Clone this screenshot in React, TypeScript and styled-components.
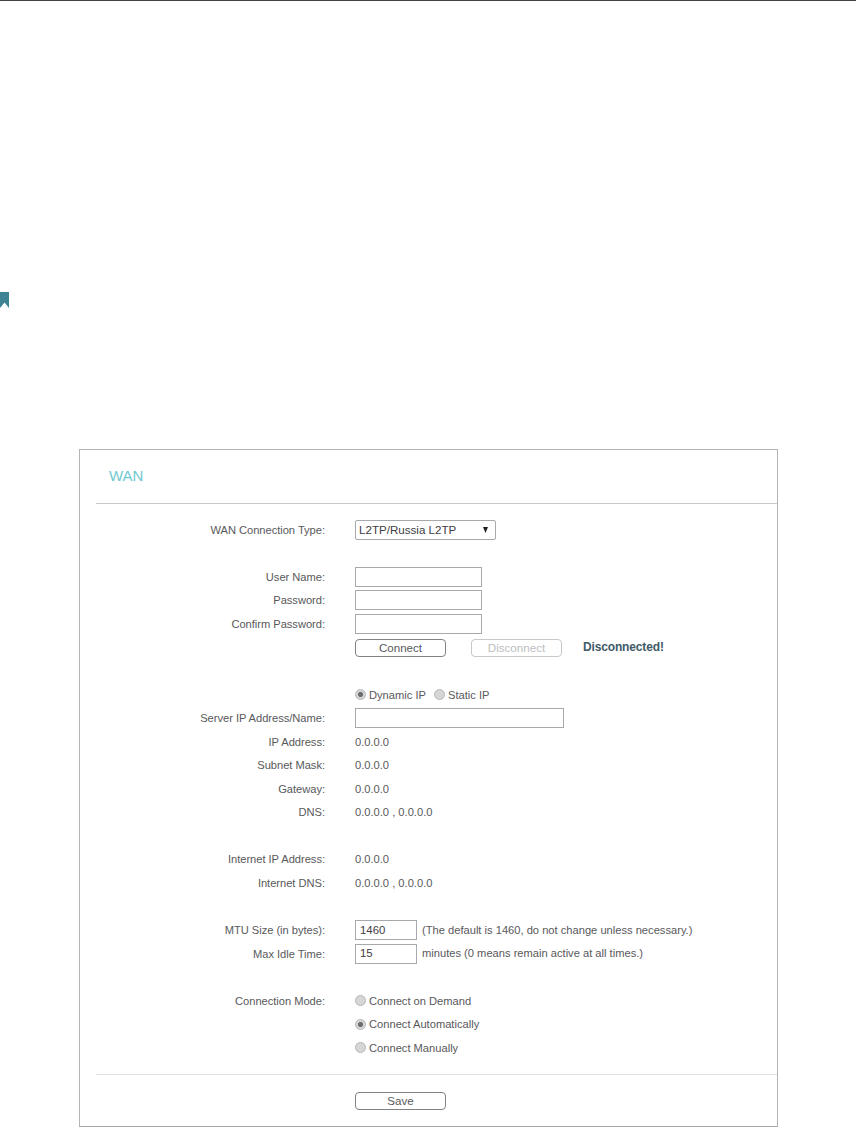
import React from "react";
import styled, { createGlobalStyle } from "styled-components";

const Global = createGlobalStyle`
  html, body { margin: 0; padding: 0; background: #fff; }
  body { font-family: "Liberation Sans", Arial, sans-serif; }
`;

const Page = styled.div`
  width: 856px;
  height: 1127px;
  overflow: hidden;
  display: flex;
  flex-direction: column;
  border-top: 1px solid #414042;
  box-sizing: border-box;
`;

const Marker = styled.svg`
  display: block;
  width: 9px;
  height: 16px;
  margin-top: 291px;
  flex: none;
`;

const Panel = styled.section`
  margin: 141px 0 0 79px;
  width: 699px;
  height: 678px;
  flex: none;
  box-sizing: border-box;
  border: 1px solid #b4b4b4;
  border-bottom-color: #a8a8a8;
  padding-left: 16px;
  display: flex;
  flex-direction: column;
`;

const Title = styled.h2`
  margin: 0;
  height: 54px;
  box-sizing: border-box;
  padding: 17px 0 0 13px;
  font-size: 15px;
  line-height: 18px;
  font-weight: 400;
  color: #6fc9d0;
  border-bottom: 1px solid #c8c8c8;
`;

const Form = styled.div`
  display: flex;
  flex-direction: column;
  padding-top: 14px;
`;

const Row = styled.div<{ $gap?: number }>`
  display: grid;
  grid-template-columns: 229px 1fr;
  column-gap: 30px;
  align-items: center;
  height: 23.55px;
  margin-top: ${(p) => p.$gap ?? 0}px;
  font-size: 11.15px;
  color: #58595b;
`;

const Label = styled.span`
  text-align: right;
  white-space: nowrap;
  letter-spacing: -0.03px;
`;

const Controls = styled.div`
  display: flex;
  align-items: center;
  white-space: nowrap;
`;

const Select = styled.div`
  width: 141px;
  height: 20px;
  box-sizing: border-box;
  border: 1px solid #a7a9ac;
  border-radius: 2px;
  padding: 0 7px 0 3px;
  display: flex;
  align-items: center;
  justify-content: space-between;
  font-size: 11.6px;
  color: #414042;
`;

const Caret = styled.svg`
  width: 5px;
  height: 6px;
  display: block;
`;

const Field = styled.div<{ $w: number }>`
  width: ${(p) => p.$w}px;
  height: 20px;
  box-sizing: border-box;
  border: 1px solid #a7a9ac;
  padding: 0 0 1px 4px;
  display: flex;
  align-items: center;
  font-size: 11.4px;
  color: #414042;
  flex: none;
`;

const Button = styled.div<{ $off?: boolean; $offset?: number }>`
  width: 91px;
  height: 18px;
  margin-left: ${(p) => p.$offset ?? 0}px;
  box-sizing: border-box;
  border: 1px solid ${(p) => (p.$off ? "#c7c8ca" : "#808285")};
  border-radius: 4px;
  padding-bottom: 1px;
  display: flex;
  align-items: center;
  justify-content: center;
  font-size: 11.6px;
  color: ${(p) => (p.$off ? "#bcbec0" : "#58595b")};
  flex: none;
`;

const Status = styled.strong`
  margin-left: 21px;
  padding-bottom: 1px;
  color: #3f5a68;
  font-size: 12px;
  font-weight: 700;
  letter-spacing: -0.15px;
`;

const Hint = styled.span`
  margin-left: 5px;
  padding-bottom: 1px;
`;

const RadioDot = styled.span<{ $on?: boolean }>`
  width: 11px;
  height: 11px;
  box-sizing: border-box;
  border-radius: 50%;
  border: 1px solid #b5b7b9;
  background: ${(p) =>
    p.$on
      ? "radial-gradient(circle, #6d6e71 0 2.2px, #d5d6d7 2.9px)"
      : "#d5d6d7"};
  display: inline-block;
  flex: none;
  margin-right: 3px;
`;

const RadioItem = styled.span`
  display: inline-flex;
  align-items: center;
  margin-right: 8px;
`;

const Footer = styled.div`
  margin-top: 14px;
  border-top: 1px solid #e2e2e2;
  padding-top: 17px;
`;

const ButtonRow = styled(Row)`
  height: 18px;
`;

const Radio = ({ on, children }: { on?: boolean; children: React.ReactNode }) => (
  <RadioItem>
    <RadioDot $on={on} />
    {children}
  </RadioItem>
);

export default function App() {
  return (
    <Page>
      <Global />
      <Marker viewBox="0 0 9 16">
        <path d="M0 0H9V16L4.5 10.5L0 16Z" fill="#3f8495" />
      </Marker>
      <Panel>
        <Title>WAN</Title>
        <Form>
          <Row>
            <Label>WAN Connection Type:</Label>
            <Controls>
              <Select>
                L2TP/Russia L2TP
                <Caret viewBox="0 0 5 6">
                  <path d="M0 0H5L2.5 6Z" fill="#231f20" />
                </Caret>
              </Select>
            </Controls>
          </Row>
          <Row $gap={23.55}>
            <Label>User Name:</Label>
            <Controls><Field $w={127} /></Controls>
          </Row>
          <Row>
            <Label>Password:</Label>
            <Controls><Field $w={127} /></Controls>
          </Row>
          <Row>
            <Label>Confirm Password:</Label>
            <Controls><Field $w={127} /></Controls>
          </Row>
          <Row>
            <span />
            <Controls>
              <Button>Connect</Button>
              <Button $off $offset={25}>Disconnect</Button>
              <Status>Disconnected!</Status>
            </Controls>
          </Row>
          <Row $gap={23.55}>
            <span />
            <Controls>
              <Radio on>Dynamic IP</Radio>
              <Radio>Static IP</Radio>
            </Controls>
          </Row>
          <Row>
            <Label>Server IP Address/Name:</Label>
            <Controls><Field $w={209} /></Controls>
          </Row>
          <Row>
            <Label>IP Address:</Label>
            <Controls>0.0.0.0</Controls>
          </Row>
          <Row>
            <Label>Subnet Mask:</Label>
            <Controls>0.0.0.0</Controls>
          </Row>
          <Row>
            <Label>Gateway:</Label>
            <Controls>0.0.0.0</Controls>
          </Row>
          <Row>
            <Label>DNS:</Label>
            <Controls>0.0.0.0 , 0.0.0.0</Controls>
          </Row>
          <Row $gap={23.55}>
            <Label>Internet IP Address:</Label>
            <Controls>0.0.0.0</Controls>
          </Row>
          <Row>
            <Label>Internet DNS:</Label>
            <Controls>0.0.0.0 , 0.0.0.0</Controls>
          </Row>
          <Row $gap={23.55}>
            <Label>MTU Size (in bytes):</Label>
            <Controls>
              <Field $w={62}>1460</Field>
              <Hint>(The default is 1460, do not change unless necessary.)</Hint>
            </Controls>
          </Row>
          <Row>
            <Label>Max Idle Time:</Label>
            <Controls>
              <Field $w={62}>15</Field>
              <Hint>minutes (0 means remain active at all times.)</Hint>
            </Controls>
          </Row>
          <Row $gap={23.55}>
            <Label>Connection Mode:</Label>
            <Controls><Radio>Connect on Demand</Radio></Controls>
          </Row>
          <Row>
            <span />
            <Controls><Radio on>Connect Automatically</Radio></Controls>
          </Row>
          <Row>
            <span />
            <Controls><Radio>Connect Manually</Radio></Controls>
          </Row>
        </Form>
        <Footer>
          <ButtonRow>
            <span />
            <Controls><Button>Save</Button></Controls>
          </ButtonRow>
        </Footer>
      </Panel>
    </Page>
  );
}
